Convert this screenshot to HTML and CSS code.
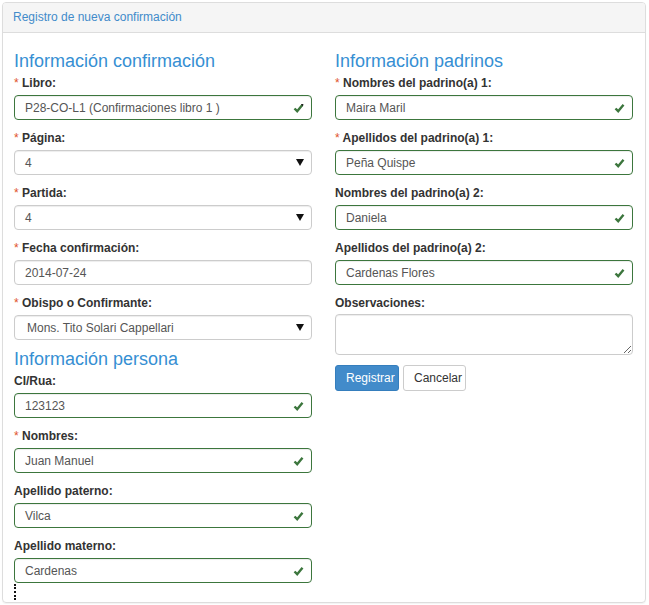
FILE: index.html
```html
<!DOCTYPE html>
<html lang="es">
<head>
<meta charset="utf-8">
<title>Registro de nueva confirmación</title>
<link rel="stylesheet" href="styles.css">
</head>
<body>
<div class="panel">
  <div class="panel-heading">Registro de nueva confirmación</div>
  <div class="panel-body">
    <div class="col">
      <h3 class="section">Información confirmación</h3>
      <div class="group">
        <label><span class="req">*</span> Libro:</label>
        <div class="control success select">
          <span class="value">P28-CO-L1 (Confirmaciones libro 1 )</span>
          <svg class="ok" width="11" height="10" viewBox="0 0 11 10"><path d="M1.5 5.5 L4.2 8.2 L9.5 1.8" fill="none" stroke="#3c763d" stroke-width="2.4"/><path d="M8 1 L10.5 1 L9.5 3.5Z" fill="#222"/></svg>
        </div>
      </div>
      <div class="group">
        <label><span class="req">*</span> Página:</label>
        <div class="control select">
          <span class="value">4</span>
          <svg class="arrow" width="8" height="7" viewBox="0 0 8 7"><path d="M0 0 H8 L4 7Z" fill="#111"/></svg>
        </div>
      </div>
      <div class="group">
        <label><span class="req">*</span> Partida:</label>
        <div class="control select">
          <span class="value">4</span>
          <svg class="arrow" width="8" height="7" viewBox="0 0 8 7"><path d="M0 0 H8 L4 7Z" fill="#111"/></svg>
        </div>
      </div>
      <div class="group">
        <label><span class="req">*</span> Fecha confirmación:</label>
        <div class="control"><span class="value">2014-07-24</span></div>
      </div>
      <div class="group">
        <label><span class="req">*</span> Obispo o Confirmante:</label>
        <div class="control select">
          <span class="value indent">Mons. Tito Solari Cappellari</span>
          <svg class="arrow" width="8" height="7" viewBox="0 0 8 7"><path d="M0 0 H8 L4 7Z" fill="#111"/></svg>
        </div>
      </div>
      <h3 class="section second">Información persona</h3>
      <div class="group">
        <label>CI/Rua:</label>
        <div class="control success"><span class="value">123123</span>
          <svg class="ok" width="11" height="10" viewBox="0 0 11 10"><path d="M1.5 5.5 L4.2 8.2 L9.5 1.8" fill="none" stroke="#3c763d" stroke-width="2.4"/></svg></div>
      </div>
      <div class="group">
        <label><span class="req">*</span> Nombres:</label>
        <div class="control success"><span class="value">Juan Manuel</span>
          <svg class="ok" width="11" height="10" viewBox="0 0 11 10"><path d="M1.5 5.5 L4.2 8.2 L9.5 1.8" fill="none" stroke="#3c763d" stroke-width="2.4"/></svg></div>
      </div>
      <div class="group">
        <label>Apellido paterno:</label>
        <div class="control success"><span class="value">Vilca</span>
          <svg class="ok" width="11" height="10" viewBox="0 0 11 10"><path d="M1.5 5.5 L4.2 8.2 L9.5 1.8" fill="none" stroke="#3c763d" stroke-width="2.4"/></svg></div>
      </div>
      <div class="group last">
        <label>Apellido materno:</label>
        <div class="control success"><span class="value">Cardenas</span>
          <svg class="ok" width="11" height="10" viewBox="0 0 11 10"><path d="M1.5 5.5 L4.2 8.2 L9.5 1.8" fill="none" stroke="#3c763d" stroke-width="2.4"/></svg></div>
      </div>
      <div class="dots"></div>
    </div>
    <div class="col">
      <h3 class="section">Información padrinos</h3>
      <div class="group">
        <label><span class="req">*</span> Nombres del padrino(a) 1:</label>
        <div class="control success"><span class="value">Maira Maril</span>
          <svg class="ok" width="11" height="10" viewBox="0 0 11 10"><path d="M1.5 5.5 L4.2 8.2 L9.5 1.8" fill="none" stroke="#3c763d" stroke-width="2.4"/></svg></div>
      </div>
      <div class="group">
        <label><span class="req">*</span> Apellidos del padrino(a) 1:</label>
        <div class="control success"><span class="value">Peña Quispe</span>
          <svg class="ok" width="11" height="10" viewBox="0 0 11 10"><path d="M1.5 5.5 L4.2 8.2 L9.5 1.8" fill="none" stroke="#3c763d" stroke-width="2.4"/></svg></div>
      </div>
      <div class="group">
        <label>Nombres del padrino(a) 2:</label>
        <div class="control success"><span class="value">Daniela</span>
          <svg class="ok" width="11" height="10" viewBox="0 0 11 10"><path d="M1.5 5.5 L4.2 8.2 L9.5 1.8" fill="none" stroke="#3c763d" stroke-width="2.4"/></svg></div>
      </div>
      <div class="group">
        <label>Apellidos del padrino(a) 2:</label>
        <div class="control success"><span class="value">Cardenas Flores</span>
          <svg class="ok" width="11" height="10" viewBox="0 0 11 10"><path d="M1.5 5.5 L4.2 8.2 L9.5 1.8" fill="none" stroke="#3c763d" stroke-width="2.4"/></svg></div>
      </div>
      <div class="group">
        <label>Observaciones:</label>
        <textarea class="area"></textarea>
      </div>
      <div class="buttons">
        <button class="btn primary" type="button">Registrar</button>
        <button class="btn default" type="button">Cancelar</button>
      </div>
    </div>
  </div>
</div>
</body>
</html>
```

FILE: styles.css
```css
* { box-sizing: border-box; }
html, body { margin: 0; padding: 0; background: #fff; }
body {
  font-family: "Liberation Sans", Arial, sans-serif;
  font-size: 12px;
  color: #333;
}
.panel {
  margin: 2px 3px 2px 2px;
  border: 1px solid #ddd;
  border-radius: 4px;
  height: 601px;
  overflow: hidden;
  box-shadow: 0 1px 1px rgba(0,0,0,0.05);
}
.panel-heading {
  background: #f5f5f5;
  border-bottom: 1px solid #ddd;
  height: 30px;
  line-height: 29px;
  padding: 0 10px;
  color: #428bca;
  font-size: 12px;
}
.panel-body {
  display: grid;
  grid-template-columns: 298px 298px;
  column-gap: 23px;
  padding: 17px 0 0 11px;
}
.section {
  margin: 0 0 3px;
  padding-top: 1px;
  font-size: 18px;
  line-height: 20px;
  font-weight: normal;
  color: #368fd3;
}
.section.second { margin-top: -1px; }
.group { margin-bottom: 9px; }
.group.last { margin-bottom: 1px; }
label {
  display: block;
  font-weight: bold;
  padding-top: 2px;
  line-height: 15px;
  margin-bottom: 4px;
  color: #333;
}
.req { color: #e0532a; font-weight: normal; }
.control {
  position: relative;
  height: 25px;
  border: 1px solid #ccc;
  border-radius: 4px;
  padding: 0 10px;
  line-height: 24px;
  color: #555;
  background: #fff;
  box-shadow: inset 0 1px 1px rgba(0,0,0,0.075);
}
.control.success { border-color: #3c763d; }
.value { white-space: nowrap; }
.value.indent { padding-left: 2px; }
.ok {
  position: absolute;
  right: 7px;
  top: 7px;
}
.arrow {
  position: absolute;
  right: 7px;
  top: 8px;
}
.area {
  display: block;
  width: 298px;
  height: 41px;
  margin-top: -1px;
  border: 1px solid #ccc;
  border-radius: 4px;
  resize: vertical;
  font-family: inherit;
  font-size: 12px;
  box-shadow: inset 0 1px 1px rgba(0,0,0,0.075);
}
.buttons {
  display: flex;
  gap: 4px;
  margin-top: 10px;
}
.btn {
  height: 26px;
  border-radius: 3px;
  font-family: inherit;
  font-size: 12px;
  padding: 0 10px;
  cursor: pointer;
}
.btn.primary {
  width: 64px;
  background: #428bca;
  border: 1px solid #357ebd;
  color: #fff;
}
.btn.default {
  width: 63px;
  background: #fff;
  border: 1px solid #ccc;
  color: #333;
}
.dots {
  width: 2px;
  height: 16px;
  border-left: 2px dotted #111;
}
```
